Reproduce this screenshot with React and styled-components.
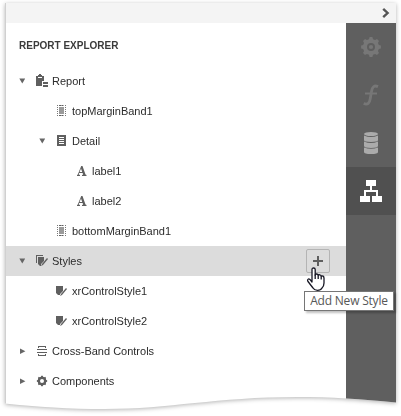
import React from 'react';
import styled, { createGlobalStyle, css } from 'styled-components';

const Global = createGlobalStyle`
  * { box-sizing: border-box; }
  html, body { margin: 0; background: #fff; overflow: hidden; }
  body { font-family: "Liberation Sans", Arial, sans-serif; font-size: 11px; color: #2c2c2c; }
  svg { display: block; flex: none; }
`;

const Stage = styled.main`
  width: 401px;
  height: 416px;
  padding: 3px 5px 0;
  filter: drop-shadow(0 1px 2px rgba(0, 0, 0, 0.3));
`;
const Designer = styled.div`
  width: 391px;
  height: 408px;
  background: #fff;
  border-left: 1px solid #d0d0d0;
  clip-path: path('M0 0H391V399.5C357 396 326 394 292 394C210 394 166 406 99 406C66 406 31 404 0 400.5Z');
  display: flex;
  flex-direction: column;
`;
const TopBar = styled.header`
  height: 20px;
  flex: none;
  background: #f4f4f4;
  display: flex;
  align-items: center;
  justify-content: flex-end;
  padding-right: 6px;
`;
const Body = styled.div`
  flex: 1;
  display: flex;
`;
const Explorer = styled.section`
  width: 340px;
`;
const Title = styled.h1`
  margin: 0;
  height: 43px;
  padding: 0 13px;
  font-size: 10px;
  line-height: 45px;
  font-weight: 700;
  color: #3a3a3a;
`;
const Row = styled.div`
  height: 30px;
  display: flex;
  align-items: center;
  padding-left: ${(p) => 13 + p.$level * 20}px;
  ${(p) => p.$selected && css`background: #dcdcdc;`}
`;
const Toggle = styled.span`
  width: 16px;
  display: flex;
`;
const IconSlot = styled.span`
  width: 17px;
  display: flex;
`;
const Label = styled.span`
  flex: 1;
  line-height: 30px;
  white-space: nowrap;
`;
const AddButton = styled.button`
  width: 24px;
  height: 24px;
  margin-right: 16px;
  padding: 0;
  border: 1px solid #b4b4b4;
  border-radius: 2px;
  background: transparent;
  display: grid;
  place-items: center;
`;
const Tabs = styled.nav`
  width: 50px;
  background: #5f5f5f;
`;
const Tab = styled.div`
  height: 48px;
  display: grid;
  place-items: center;
  ${(p) => p.$active && css`background: #505050;`}
`;
const Pointer = styled.svg`
  position: absolute;
  left: 306px;
  top: 267px;
`;
const Tooltip = styled.div`
  position: absolute;
  left: 304px;
  top: 291px;
  width: 90px;
  height: 20px;
  border: 1px solid #767676;
  background: #fff;
  color: #575757;
  font: 12px/18px "Open Sans", "Noto Sans", sans-serif;
  letter-spacing: -0.2px;
  text-align: center;
  white-space: nowrap;
  box-shadow: 2px 2px 2px rgba(0, 0, 0, 0.25);
`;

const Glyph = ({ children, ...rest }) => (
  <svg width="14" height="14" viewBox="0 0 14 14" fill="#5f5f5f" {...rest}>{children}</svg>
);

const gearPath = (c, outer, inner, teeth) => {
  const pts = [];
  const step = (Math.PI * 2) / teeth;
  for (let i = 0; i < teeth; i += 1) {
    [[-0.32, inner], [-0.18, outer], [0.18, outer], [0.32, inner]].forEach(([o, r]) => {
      const a = (i + o) * step;
      pts.push(`${(c + r * Math.sin(a)).toFixed(2)} ${(c - r * Math.cos(a)).toFixed(2)}`);
    });
  }
  return `M${pts.join('L')}Z`;
};

const icons = {
  report: (
    <Glyph>
      <path d="M1 2H3V4H7V2H9V7H7V12H1ZM3 1H4V0H6V1H7V3H3Z" />
      <path d="M8 8H13V10H8ZM8 11H13V13H8Z" />
    </Glyph>
  ),
  margin: (
    <Glyph>
      <path d="M4 3H9V10H4Z" fill="#9a9a9a" />
      <path d="M2.5 1V12M10.5 1V12" stroke="#777" strokeDasharray="1 1" />
      <path d="M4 1.5H9M4 11.5H9" stroke="#5f5f5f" strokeDasharray="2 0.4" />
    </Glyph>
  ),
  detail: (
    <Glyph>
      <path fillRule="evenodd" d="M2 1H11V12H2ZM4 3V4H9V3ZM4 5V6H9V5ZM4 7V8H9V7ZM4 9V10H9V9Z" />
    </Glyph>
  ),
  label: (
    <Glyph>
      <path fillRule="evenodd" d="M6.2 2H7.5L10.5 10.4L11.5 11V12H7V11L8.2 10.6L7.6 9H4.2L3.7 10.5L5 11V12H2V11L2.8 10.4ZM4.6 8H7.2L6 4.6Z" />
    </Glyph>
  ),
  styles: (
    <Glyph>
      <path d="M1 1H8V2H2V9H1Z" />
      <path d="M3 3H9V7L6 10V12H5L3 10Z" />
      <path d="M12 4L13 5L8 11L6 12L7 10Z" />
    </Glyph>
  ),
  style: (
    <Glyph>
      <path d="M1 2H8V7L5 10V11H3L1 9Z" />
      <path d="M11 4L12 5L7 11L5 12L6 10Z" />
    </Glyph>
  ),
  cross: (
    <Glyph>
      <path d="M3 4V2H11V4H10V3H4V4ZM2 5H12V6H2ZM2 8H12V9H2ZM3 10H4V11H10V10H11V12H3Z" />
    </Glyph>
  ),
  component: (
    <Glyph>
      <path fillRule="evenodd" d={`${gearPath(7, 5.2, 4.4, 8)}M7 5A2 2 0 1 0 7 9A2 2 0 1 0 7 5Z`} />
    </Glyph>
  ),
};

const Arrow = ({ open }) => (
  <svg width="7" height="8" viewBox="0 0 7 8" fill="#666">
    {open ? <path d="M0.3 1.5H6.2L3.3 6.5Z" /> : <path d="M1 1.4L6.4 4.2L1 7Z" />}
  </svg>
);

const nodes = [
  { level: 0, icon: 'report', text: 'Report', toggle: 'open' },
  { level: 1, icon: 'margin', text: 'topMarginBand1' },
  { level: 1, icon: 'detail', text: 'Detail', toggle: 'open' },
  { level: 2, icon: 'label', text: 'label1' },
  { level: 2, icon: 'label', text: 'label2' },
  { level: 1, icon: 'margin', text: 'bottomMarginBand1' },
  { level: 0, icon: 'styles', text: 'Styles', toggle: 'open', selected: true },
  { level: 1, icon: 'style', text: 'xrControlStyle1' },
  { level: 1, icon: 'style', text: 'xrControlStyle2' },
  { level: 0, icon: 'cross', text: 'Cross-Band Controls', toggle: 'closed' },
  { level: 0, icon: 'component', text: 'Components', toggle: 'closed' },
];

const GearTab = () => (
  <svg width="20" height="20" viewBox="0 0 20 20" fill="#777">
    <path fillRule="evenodd" d={`${gearPath(10, 10, 8.1, 8)}M10 6A4 4 0 1 0 10 14A4 4 0 1 0 10 6Z`} />
    <circle cx="10" cy="10" r="2.1" />
  </svg>
);
const FunctionTab = () => (
  <svg width="20" height="22" viewBox="0 0 20 22" fill="none" stroke="#777">
    <path strokeWidth="2.8" d="M17 2.6C13 0.8 11.3 3.2 10.6 7L9.2 15C8.6 19 6.8 21.2 2.7 19.5" />
    <path strokeWidth="2" d="M4 9.5H16" />
  </svg>
);
const DataTab = () => (
  <svg width="14" height="22" viewBox="0 0 14 22" fill="#ababab">
    <ellipse cx="7" cy="2" rx="7" ry="2" />
    <path d="M0 3.4Q7 6.4 14 3.4V8.3Q14 10 7 10Q0 10 0 8.3ZM0 9.4Q7 12.4 14 9.4V14.1Q14 16 7 16Q0 16 0 14.1ZM0 15.4Q7 18.3 14 15.4V20Q14 22 7 22Q0 22 0 20Z" />
  </svg>
);
const TreeTab = () => (
  <svg width="22" height="22" viewBox="0 0 22 22" fill="#fff">
    <path d="M6 0H16V6H12V10H18V16H22V22H12V16H16V12H6V16H10V22H0V16H4V10H10V6H6Z" />
  </svg>
);

export default function App() {
  return (
    <>
      <Global />
      <Stage>
        <Designer>
          <TopBar>
            <svg width="8" height="12" viewBox="0 0 8 12" fill="none" stroke="#555" strokeWidth="2.4">
              <path d="M1.2 1.8L5.6 6L1.2 10.2" />
            </svg>
          </TopBar>
          <Body>
            <Explorer>
              <Title>REPORT EXPLORER</Title>
              {nodes.map((n) => (
                <Row key={n.text} $level={n.level} $selected={n.selected}>
                  <Toggle>{n.toggle && <Arrow open={n.toggle === 'open'} />}</Toggle>
                  <IconSlot>{icons[n.icon]}</IconSlot>
                  <Label>{n.text}</Label>
                  {n.selected && (
                    <AddButton aria-label="Add New Style">
                      <svg width="10" height="10" viewBox="0 0 10 10" fill="#5f5f5f">
                        <path d="M4 0H6V4H10V6H6V10H4V6H0V4H4Z" />
                      </svg>
                    </AddButton>
                  )}
                </Row>
              ))}
            </Explorer>
            <Tabs>
              <Tab><GearTab /></Tab>
              <Tab><FunctionTab /></Tab>
              <Tab><DataTab /></Tab>
              <Tab $active><TreeTab /></Tab>
            </Tabs>
          </Body>
        </Designer>
      </Stage>
      <Tooltip>Add New Style</Tooltip>
      <Pointer width="20" height="25" viewBox="0 0 20 25" fill="#fff" stroke="#171724" strokeWidth="1.3" strokeLinejoin="round">
        <path d="M6 15V2.5Q6 1 7.6 1Q9.2 1 9.2 2.5V8.2Q9.4 6.8 10.8 7Q12.2 7.2 12.2 8.5Q12.6 7.5 13.8 7.8Q15.2 8 15.2 9.5Q15.6 8.7 16.6 9Q18 9.3 18 11V16Q18 19 16 21Q14.8 23.4 11.5 23.4Q8.4 23.4 7 21L2 14.5Q1 12.8 2.4 12Q3.5 11.5 6 15Z" />
        <path fill="none" d="M9.2 7.5V12M12.2 8.5V12M15.2 9.5V12.5" />
      </Pointer>
    </>
  );
}
